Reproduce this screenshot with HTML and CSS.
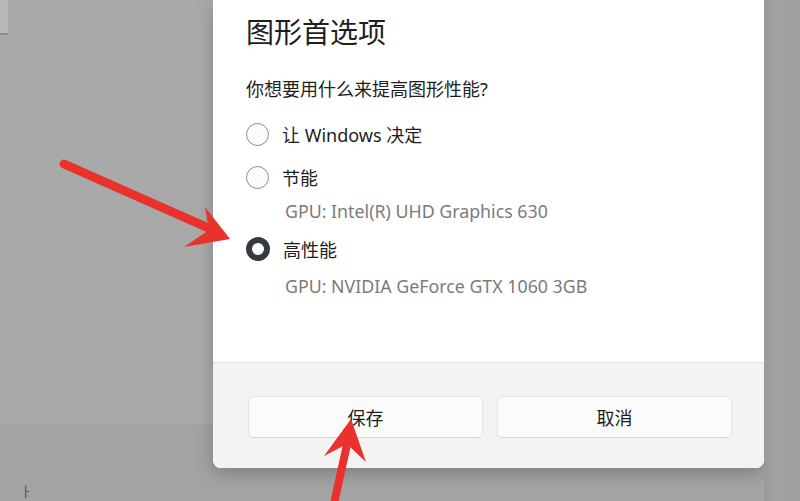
FILE: index.html
```html
<!DOCTYPE html>
<html lang="zh-CN">
<head>
  <meta charset="UTF-8" />
  <meta name="viewport" content="width=device-width, initial-scale=1.0" />
  <title>图形首选项</title>
  <link rel="stylesheet" href="styles.css">
</head>
<body>
  <div class="desk">
    <div class="side">
      <div class="side-top">
        <div class="stub"></div>
      </div>
      <div class="side-bottom"><span class="mark">ㅏ</span></div>
    </div>

    <div class="dialog-col">
      <div class="dialog">
        <div class="dialog-body">
          <h2 class="title">图形首选项</h2>
          <p class="question">你想要用什么来提高图形性能?</p>

          <div class="option option-first">
            <span class="radio"></span>
            <span class="option-label">让 Windows 决定</span>
          </div>
          <div class="option option-second">
            <span class="radio"></span>
            <span class="option-label">节能</span>
          </div>
          <div class="gpu gpu-first">GPU: Intel(R) UHD Graphics 630</div>
          <div class="option option-third">
            <span class="radio checked"></span>
            <span class="option-label">高性能</span>
          </div>
          <div class="gpu gpu-second">GPU: NVIDIA GeForce GTX 1060 3GB</div>
        </div>

        <div class="dialog-footer">
          <button class="btn">保存</button>
          <button class="btn">取消</button>
        </div>
      </div>
    </div>

    <div class="right"></div>
  </div>

  <!-- red annotation arrows drawn over the screenshot -->
  <svg class="arrows" width="800" height="501" viewBox="0 0 800 501">
    <line x1="64" y1="164" x2="213" y2="230" stroke="#e8322b" stroke-width="9" stroke-linecap="round" />
    <polygon points="230,239 205,207 209,230 184,247" fill="#e8322b" />
    <line x1="333" y1="508" x2="348" y2="440" stroke="#e8322b" stroke-width="8" stroke-linecap="round" />
    <polygon points="351,419 324,456 347,444 366,462" fill="#e8322b" />
  </svg>
</body>
</html>
```

FILE: styles.css
```css
:root {
  --desk: #a9a9aa;
  --desk-dark: #a3a3a4;
  --dialog-bg: #ffffff;
  --footer-bg: #f3f3f3;
  --text-color: #1e1e1e;
  --muted: #7b7b7b;
  --line: #e3e3e3;
}

body {
  margin: 0;
  padding: 0;
  width: 800px;
  height: 501px;
  overflow: hidden;
  background-color: var(--desk);
  font-family: "Noto Sans", "Noto Sans CJK SC", sans-serif;
  color: var(--text-color);
}

.desk {
  display: flex;
  height: 501px;
}

.side {
  width: 213px;
  display: flex;
  flex-direction: column;
}

.side-top {
  flex: 0 0 425px;
}

.stub {
  width: 8px;
  height: 33px;
  background-color: #b9b9b9;
  border-bottom: 2px solid #8e8e8e;
}

.side-bottom {
  flex: 1;
  background-color: var(--desk-dark);
  border-top: 1px solid #a0a0a0;
  padding-left: 20px;
}

.mark {
  display: block;
  margin-top: 58px;
  font-size: 13px;
  line-height: 14px;
  color: #555;
}

.dialog-col {
  width: 551px;
  background-color: #a4a4a4;
}

.dialog {
  height: 468px;
  background-color: var(--dialog-bg);
  border-radius: 0 0 8px 8px;
  box-shadow: 0 6px 18px rgba(0, 0, 0, 0.22);
  display: flex;
  flex-direction: column;
  overflow: hidden;
}

.dialog-body {
  flex: 1;
  padding: 16px 33px 0;
}

.title {
  margin: 0;
  font-size: 28px;
  font-weight: 400;
  line-height: 32px;
}

.question {
  margin: 31px 0 0;
  font-size: 18px;
  line-height: 20px;
}

.option {
  display: flex;
  align-items: center;
  gap: 13px;
  height: 40px;
}

.option-first {
  margin-top: 15px;
}

.option-second {
  margin-top: 3px;
}

.option-third {
  margin-top: 8px;
}

.option-label {
  font-size: 18px;
}

.radio {
  width: 21px;
  height: 21px;
  border: 1.5px solid #8d8d8d;
  border-radius: 50%;
  background-color: #fbfbfb;
  flex-shrink: 0;
}

.radio.checked {
  width: 12px;
  height: 12px;
  border: 6px solid #343a40;
  background-color: #fff;
}

.gpu {
  margin-left: 39px;
  font-size: 17.8px;
  line-height: 20px;
  color: var(--muted);
}

.gpu-first {
  margin-top: 4px;
}

.gpu-second {
  margin-top: 7px;
}

.dialog-footer {
  flex: 0 0 106px;
  box-sizing: border-box;
  background-color: var(--footer-bg);
  border-top: 1px solid var(--line);
  padding: 33px 32px 0 35px;
  display: flex;
  gap: 14px;
  align-items: flex-start;
}

.btn {
  flex: 1;
  height: 42px;
  border: 1px solid #e4e4e4;
  border-bottom-color: #d6d6d6;
  border-radius: 5px;
  background-color: #fbfbfb;
  font-family: "Noto Sans", "Noto Sans CJK SC", sans-serif;
  font-size: 18px;
  color: var(--text-color);
}

.right {
  flex: 1;
  background: linear-gradient(90deg, #9a9a9a, #a2a2a2 40%, #9f9f9f);
}

.arrows {
  position: absolute;
  top: 0;
  left: 0;
  pointer-events: none;
}
```
